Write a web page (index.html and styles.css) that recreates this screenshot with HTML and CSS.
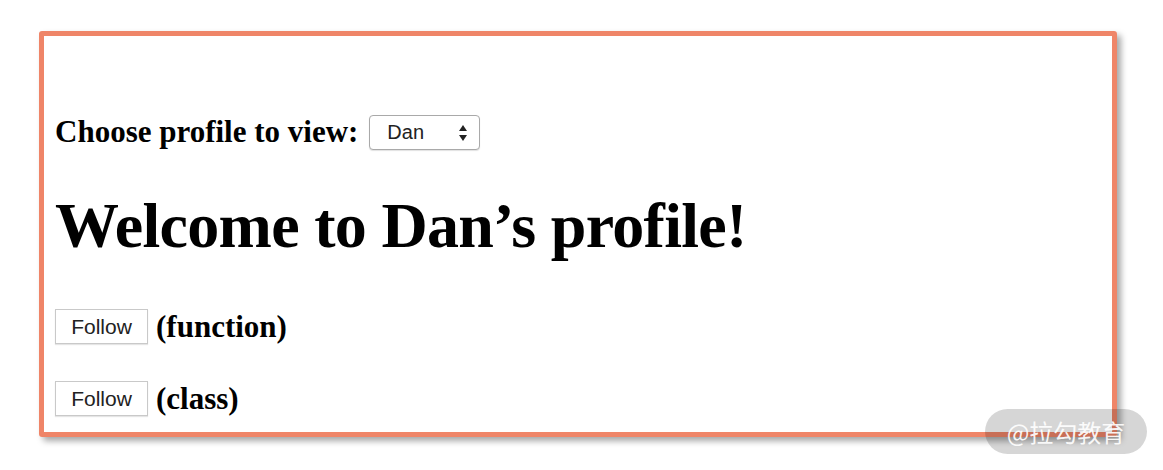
FILE: index.html
```html
<!DOCTYPE html>
<html>
<head>
<meta charset="utf-8">
<link rel="stylesheet" href="styles.css">
</head>
<body>
<div class="frame">
  <div class="row choose">
    <span class="label">Choose profile to view:</span>
    <span class="select-wrap">
      <select class="select">
        <option>Dan</option>
        <option>Sophie</option>
        <option>Sunil</option>
      </select>
      <svg class="arrows" width="10" height="20" viewBox="0 0 10 20"><path d="M5 2 L9 8 H1 Z" fill="#222"/><path d="M5 18 L9 12 H1 Z" fill="#222"/></svg>
    </span>
  </div>
  <h1 class="title">Welcome to Dan’s profile!</h1>
  <div class="row follow first">
    <button class="btn">Follow</button>
    <span class="label">(function)</span>
  </div>
  <div class="row follow second">
    <button class="btn">Follow</button>
    <span class="label">(class)</span>
  </div>
</div>
<div class="watermark">@拉勾教育</div>
</body>
</html>
```
FILE: styles.css
```css
html, body {
  margin: 0;
  padding: 0;
  background: #fff;
}
body {
  position: relative;
  width: 1163px;
  height: 470px;
  overflow: hidden;
  font-family: "Liberation Serif", "Times New Roman", serif;
  color: #000;
}
.frame {
  box-sizing: border-box;
  margin: 31px 0 0 39px;
  width: 1078px;
  height: 406px;
  border: 5px solid #ef8568;
  border-radius: 3px;
  box-shadow: 4px 4px 6px rgba(0, 0, 0, 0.35);
  padding: 78px 0 0 11px;
  display: flex;
  flex-direction: column;
}
.row {
  display: flex;
  align-items: center;
}
.label {
  font-weight: bold;
  font-size: 31px;
  line-height: 36px;
}
.choose {
  height: 36px;
}
.select-wrap {
  position: relative;
  margin-left: 11px;
  display: inline-block;
}
.select {
  appearance: none;
  -webkit-appearance: none;
  box-sizing: border-box;
  width: 111px;
  height: 35px;
  border: 1px solid #a9a9a9;
  border-radius: 4px;
  background: #fff;
  font-family: "Liberation Sans", Arial, sans-serif;
  font-size: 20px;
  color: #222;
  padding: 0 0 0 17px;
  box-shadow: 0 1px 1px rgba(0,0,0,0.12);
}
.arrows {
  position: absolute;
  right: 12px;
  top: 8px;
  pointer-events: none;
}
.title {
  margin: 36px 0 0 0;
  font-size: 64px;
  line-height: 80px;
  font-weight: bold;
  letter-spacing: -0.7px;
}
.follow {
  height: 35px;
}
.first {
  margin-top: 43px;
}
.second {
  margin-top: 37px;
}
.btn {
  box-sizing: border-box;
  width: 93px;
  height: 35px;
  margin-right: 8px;
  border: 1px solid #c9c9c9;
  background: #fff;
  font-family: "Liberation Sans", Arial, sans-serif;
  font-size: 21px;
  color: #222;
  padding: 0;
  box-shadow: 0 1px 1px rgba(0,0,0,0.1);
}
.watermark {
  position: absolute;
  left: 985px;
  top: 409px;
  width: 162px;
  height: 45px;
  border-radius: 23px;
  background: rgba(0, 0, 0, 0.16);
  color: rgba(255, 255, 255, 0.92);
  font-family: "Noto Sans CJK SC", "Noto Sans", sans-serif;
  font-size: 24px;
  line-height: 45px;
  text-align: center;
}
```
